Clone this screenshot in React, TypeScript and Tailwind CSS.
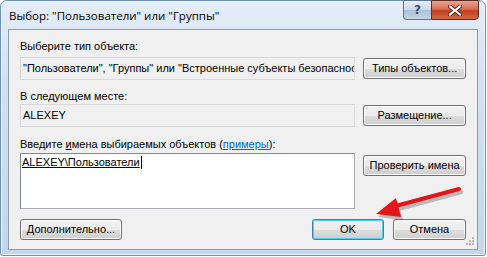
import { type FC, type ReactNode } from 'react';

const ui = "font-['Liberation_Sans',Arial,sans-serif] text-[11px] leading-[13px] text-black";

const WinButton: FC<{ children: ReactNode; className?: string; isDefault?: boolean }> = ({ children, className = '', isDefault }) => (
  <div
    className={`h-[21px] flex items-center justify-center rounded-[3px] border ${
      isDefault
        ? 'border-[#3c7fb1] shadow-[inset_0_0_0_1px_#48d0f8]'
        : 'border-[#707070] shadow-[inset_0_0_0_1px_#fcfcfc]'
    } bg-[linear-gradient(to_bottom,#f2f2f2_0%,#ebebeb_50%,#dddddd_51%,#cfcfcf_100%)] ${className}`}
  >
    <span className={ui}>{children}</span>
  </div>
);

const ReadOnlyBox: FC<{ children: ReactNode }> = ({ children }) => (
  <div className="w-[336px] h-[23px] border border-[#d9d9d9] bg-[#f0f0f0] px-[2px] flex items-center overflow-hidden whitespace-nowrap">
    <span className={ui}>{children}</span>
  </div>
);

export default function App() {
  return (
    <div className="relative w-[487px] h-[257px] bg-white overflow-hidden">
      <div className="w-[486px] h-[256px] rounded-t-[7px] rounded-b-[3px] border border-[#6f8fb4] bg-[linear-gradient(to_bottom,#e4edf7_0%,#d3e2f2_30%,#c3d6eb_100%)] shadow-[inset_0_0_0_1px_#eef4fb] flex flex-col px-[7px] pb-[5px]">
        {/* title bar */}
        <div className="h-[28px] flex items-start justify-between">
          <span className="mt-[7px] ml-[1px] font-['Open_Sans','Noto_Sans',sans-serif] text-[11.5px] leading-[16px] text-black">
            Выбор: "Пользователи" или "Группы"
          </span>
          <div className="flex -mt-px -mr-[1px]">
            <div className="w-[28px] h-[20px] border border-[#5e7594] border-r-0 rounded-bl-[4px] bg-[linear-gradient(to_bottom,#e6eef7_0%,#c9d8ea_50%,#aebfd6_51%,#c4d4e8_100%)] flex items-center justify-center">
              <span className="font-['DejaVu_Sans',sans-serif] text-[12px] font-bold leading-none text-[#3c4e66]">?</span>
            </div>
            <div className="w-[48px] h-[20px] border border-[#5e2a22] rounded-br-[4px] bg-[linear-gradient(to_bottom,#e8a593_0%,#d66e56_45%,#c23f22_55%,#d56a48_100%)] flex items-center justify-center">
              <svg width="14" height="11" viewBox="0 0 14 11">
                <path d="M2 1.5 L12 9.5 M12 1.5 L2 9.5" stroke="#4a1a10" strokeWidth="4" strokeLinecap="square" />
                <path d="M2 1.5 L12 9.5 M12 1.5 L2 9.5" stroke="#ffffff" strokeWidth="2.2" strokeLinecap="square" />
              </svg>
            </div>
          </div>
        </div>

        {/* client area */}
        <div className="flex-1 border border-[#8a9cb3] bg-[#f0f0f0] px-[11px] flex flex-col relative">
          <div className={`${ui} mt-[10px]`}>Выберите тип объекта:</div>
          <div className="mt-[4px] flex items-center gap-[8px]">
            <ReadOnlyBox>"Пользователи", "Группы" или "Встроенные субъекты безопасности"</ReadOnlyBox>
            <WinButton className="w-[103px]">Типы объектов...</WinButton>
          </div>

          <div className={`${ui} mt-[10px]`}>В следующем месте:</div>
          <div className="mt-[1px] flex items-center gap-[8px]">
            <ReadOnlyBox>ALEXEY</ReadOnlyBox>
            <WinButton className="w-[103px]">Размещение...</WinButton>
          </div>

          <div className={`${ui} mt-[11px]`}>
            Введите <span className="underline">и</span>мена выбираемых объектов (
            <span className="text-[#0066cc] underline">примеры</span>):
          </div>
          <div className="mt-[2px] flex items-start gap-[8px]">
            <div className="w-[336px] h-[56px] border border-[#abadb3] border-t-[#828790] border-l-[#828790] bg-white px-[1px] pt-[2px] flex items-start">
              <span className={`${ui} underline`}>ALEXEY\Пользователи</span>
              <span className="w-px h-[13px] bg-black ml-px" />
            </div>
            <WinButton className="w-[103px] mt-[2px]">Проверить имена</WinButton>
          </div>

          <div className="mt-[10px] flex items-center">
            <WinButton className="w-[102px]">Дополнительно...</WinButton>
            <div className="flex-1" />
            <WinButton isDefault className="w-[72px]">OK</WinButton>
            <WinButton className="w-[73px] ml-[9px]">Отмена</WinButton>
          </div>

          {/* size grip */}
          <svg className="absolute right-[3px] bottom-[4px]" width="8" height="8" viewBox="0 0 8 8">
            {[
              [6, 0], [6, 3], [3, 3], [6, 6], [3, 6], [0, 6],
            ].map(([x, y], i) => (
              <rect key={i} x={x} y={y} width="2" height="2" fill="#b8b8b8" />
            ))}
          </svg>
        </div>
      </div>

      {/* red annotation arrow */}
      <svg className="absolute left-0 top-0 pointer-events-none" width="487" height="257" viewBox="0 0 487 257">
        <g opacity="0.35" transform="translate(2 3)">
          <path d="M459 189 L392 207" stroke="#555" strokeWidth="4.5" strokeLinecap="round" />
          <path d="M376 214 L396 198 L401 217 Z" fill="#555" />
        </g>
        <path d="M459 189 L392 207" stroke="#e3161b" strokeWidth="4" strokeLinecap="round" />
        <path d="M376 214 L396 198 L401 217 Z" fill="#e3161b" />
      </svg>
    </div>
  );
}
